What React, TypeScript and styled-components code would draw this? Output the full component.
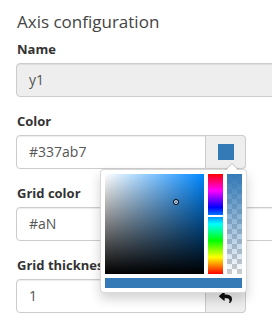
import styled, { createGlobalStyle } from 'styled-components';
import { FaReply } from 'react-icons/fa';

const GlobalStyle = createGlobalStyle`
    body {
        margin: 0;
        background: #fff;
        font-family: 'Open Sans', 'Noto Sans', sans-serif;
        font-size: 14px;
        color: #333;
    }
`;

const Panel = styled.div`
    box-sizing: border-box;
    width: 272px;
    height: 325px;
    padding: 10px 0 0 16px;
    overflow: hidden;
`;

const Title = styled.h4`
    margin: 0 0 5px 1px;
    font-size: 17px;
    font-weight: 400;
    line-height: 24px;
    color: #444;
`;

const FormGroup = styled.div`
    margin-bottom: 14px;
`;

const Label = styled.label`
    display: block;
    margin: 0 0 4px 1px;
    font-size: 13px;
    font-weight: 700;
    line-height: 20px;
    color: #333;
`;

const Input = styled.div<{ $disabled?: boolean; $grouped?: boolean }>`
    box-sizing: border-box;
    height: 34px;
    padding: 6px 12px;
    line-height: 20px;
    color: #555;
    background: ${({ $disabled }) => ($disabled ? '#eee' : '#fff')};
    border: 1px solid #ccc;
    border-radius: ${({ $grouped }) => ($grouped ? '4px 0 0 4px' : '4px')};
    box-shadow: inset 0 1px 1px rgba(0, 0, 0, 0.075);
    flex: 1;
    width: ${({ $grouped }) => ($grouped ? 'auto' : '280px')};
`;

const InputGroup = styled.div`
    position: relative;
    display: flex;
    width: 230px;
`;

const Addon = styled.div`
    box-sizing: border-box;
    width: 40px;
    height: 34px;
    display: flex;
    align-items: center;
    justify-content: center;
    background: #eee;
    border: 1px solid #ccc;
    border-left: 0;
    border-radius: 0 4px 4px 0;
    color: #111;
`;

const Swatch = styled.i<{ $color: string }>`
    display: block;
    width: 16px;
    height: 16px;
    background: ${({ $color }) => $color};
`;

const Popup = styled.div`
    position: absolute;
    z-index: 10;
    top: 34px;
    left: 84px;
    box-sizing: border-box;
    width: 147px;
    padding: 4px;
    background: #fff;
    border: 1px solid rgba(0, 0, 0, 0.15);
    border-radius: 4px;
    box-shadow: 0 6px 12px rgba(0, 0, 0, 0.175);

    &::before,
    &::after {
        content: '';
        position: absolute;
        border-left: 7px solid transparent;
        border-right: 7px solid transparent;
        border-bottom: 7px solid rgba(0, 0, 0, 0.2);
        top: -7px;
        left: 124px;
    }

    &::after {
        border-left-width: 6px;
        border-right-width: 6px;
        border-bottom: 6px solid #fff;
        top: -6px;
        left: 125px;
    }
`;

const Pickers = styled.div`
    display: flex;
    gap: 4px;
`;

const Saturation = styled.div<{ $hue: number }>`
    position: relative;
    width: 100px;
    height: 100px;
    background:
        linear-gradient(to top, #000, rgba(0, 0, 0, 0)),
        linear-gradient(to right, #fff, rgba(255, 255, 255, 0)),
        hsl(${({ $hue }) => $hue}, 100%, 50%);
`;

const Cursor = styled.i`
    position: absolute;
    box-sizing: border-box;
    width: 6px;
    height: 6px;
    margin: -3px 0 0 -3px;
    border: 1px solid #000;
    border-radius: 50%;
    box-shadow: inset 0 0 0 1px #fff;
`;

const Hue = styled.div`
    position: relative;
    width: 15px;
    height: 100px;
    background: linear-gradient(
        to bottom,
        #f00 0%,
        #f0f 16.67%,
        #00f 33.33%,
        #0ff 50%,
        #0f0 66.67%,
        #ff0 83.33%,
        #f00 100%
    );
`;

const HueMarker = styled.i`
    position: absolute;
    left: 0;
    right: 0;
    height: 2px;
    margin-top: -1px;
    background: #fff;
`;

const Alpha = styled.div<{ $color: string }>`
    width: 15px;
    height: 100px;
    background:
        linear-gradient(to bottom, ${({ $color }) => $color}, rgba(51, 122, 183, 0)),
        repeating-conic-gradient(#ccc 0 25%, #fff 0 50%) 0 0 / 10px 10px;
`;

const Preview = styled.div<{ $color: string }>`
    height: 10px;
    margin-top: 4px;
    background: ${({ $color }) => $color};
`;

const ReplyIcon = styled(FaReply)`
    font-size: 13px;
    margin-top: 2px;
`;

export default function App() {
    const color = '#337ab7';
    const hue = 208;
    const sat = 72;
    const val = 72;

    return (
        <>
            <GlobalStyle />
            <Panel>
                <Title>Axis configuration</Title>
                <FormGroup>
                    <Label>Name</Label>
                    <Input $disabled>y1</Input>
                </FormGroup>
                <FormGroup>
                    <Label>Color</Label>
                    <InputGroup>
                        <Input $grouped>{color}</Input>
                        <Addon>
                            <Swatch $color={color} />
                        </Addon>
                        <Popup>
                            <Pickers>
                                <Saturation $hue={hue}>
                                    <Cursor style={{ left: `${sat}%`, top: `${100 - val}%` }} />
                                </Saturation>
                                <Hue>
                                    <HueMarker style={{ top: `${(1 - hue / 360) * 100}%` }} />
                                </Hue>
                                <Alpha $color={color} />
                            </Pickers>
                            <Preview $color={color} />
                        </Popup>
                    </InputGroup>
                </FormGroup>
                <FormGroup>
                    <Label>Grid color</Label>
                    <Input>#aN</Input>
                </FormGroup>
                <FormGroup>
                    <Label>Grid thickness</Label>
                    <InputGroup>
                        <Input $grouped>1</Input>
                        <Addon>
                            <ReplyIcon />
                        </Addon>
                    </InputGroup>
                </FormGroup>
            </Panel>
        </>
    );
}
